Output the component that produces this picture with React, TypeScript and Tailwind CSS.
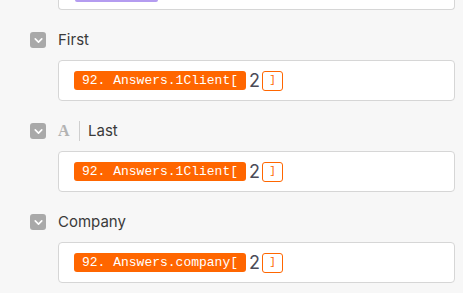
import { ChevronDown } from 'lucide-react';

const fields = [
  { label: 'First', path: 'Answers.1Client', typed: false },
  { label: 'Last', path: 'Answers.1Client', typed: true },
  { label: 'Company', path: 'Answers.company', typed: false },
];

function Field({ label, path, typed }: { label: string; path: string; typed: boolean }) {
  return (
    <div className="mb-[20px]">
      <div className="flex h-5 items-center">
        <div className="flex h-4 w-4 items-center justify-center rounded-[3px] bg-[#a9a9a9]">
          <ChevronDown className="h-[13px] w-[13px] text-white" strokeWidth={3} />
        </div>
        {typed && (
          <>
            <span className="ml-[12px] w-[12px] font-['Liberation_Serif',serif] text-[16px] font-bold leading-none text-[#b3b3b3]">
              A
            </span>
            <div className="ml-[9px] h-5 w-px bg-[#cfcfcf]" />
          </>
        )}
        <span className={`${typed ? 'ml-[8px]' : 'ml-[12px]'} text-[15px] text-[#3a3a3a]`}>{label}</span>
      </div>
      <div className="ml-[28px] mt-[10px] flex h-[41px] items-center rounded-[4px] border border-[#d6d6d6] bg-white pl-[15px]">
        <span className="flex h-[19px] items-center rounded-[3px] bg-[#ff6600] px-[8px] font-['Liberation_Mono',monospace] text-[13px] text-white">
          {`92. ${path}[`}
        </span>
        <span className="ml-[3px] font-['Inter',sans-serif] text-[18px] leading-none text-[#4b4b57]">2</span>
        <span className="ml-[2px] flex h-[20px] w-[21px] items-center justify-center rounded-[3px] border border-[#ff6600] bg-white font-['Liberation_Mono',monospace] text-[11px] text-[#ff6600]">
          ]
        </span>
      </div>
    </div>
  );
}

export default function App() {
  return (
    <div className="h-[293px] w-[463px] overflow-hidden bg-[#f7f7f7] font-['Inter',sans-serif]">
      <div className="ml-[58px] mr-[8px] h-[10px] rounded-b-[4px] border border-t-0 border-[#d6d6d6] bg-white">
        <div className="ml-[16px] h-[2px] w-[83px] rounded-b-[2px] bg-[#b49cf0]" />
      </div>
      <div className="mt-[20px] pl-[30px] pr-[8px]">
        {fields.map((f) => (
          <Field key={f.label} {...f} />
        ))}
      </div>
    </div>
  );
}
